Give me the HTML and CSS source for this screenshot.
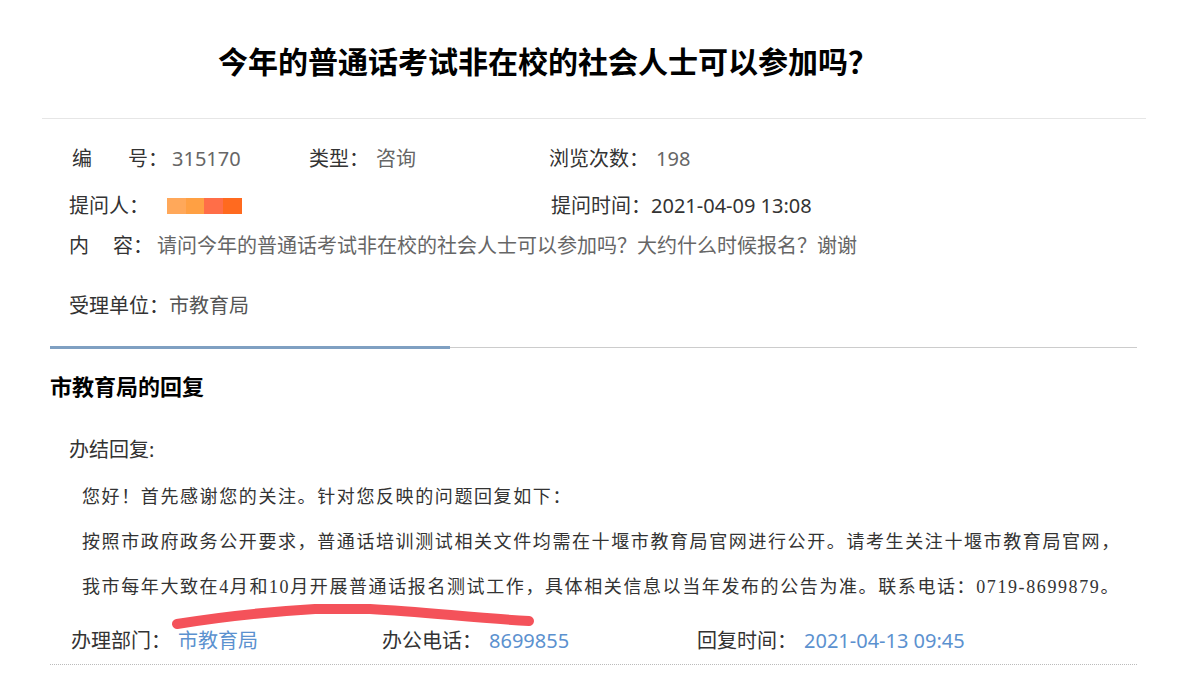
FILE: index.html
```html
<!DOCTYPE html>
<html lang="zh-CN">
<head>
    <meta charset="UTF-8">
    <meta name="viewport" content="width=device-width, initial-scale=1.0">
    <title>今年的普通话考试非在校的社会人士可以参加吗？</title>
    <link rel="stylesheet" href="styles.css">
</head>
<body>
    <div class="page">
        <h1 class="title">今年的普通话考试非在校的社会人士可以参加吗？</h1>

        <div class="info">
            <div class="row row-1">
                <div class="cell"><span class="label label-no">编<span class="sp2"></span>号：</span><span class="val">315170</span></div>
                <div class="cell"><span class="label">类型：</span><span class="val v7">咨询</span></div>
                <div class="cell"><span class="label">浏览次数：</span><span class="val v7">198</span></div>
            </div>
            <div class="row row-2">
                <div class="cell wide"><span class="label">提问人：</span><span class="mask"><i class="m1"></i><i class="m2"></i><i class="m3"></i><i class="m4"></i></span></div>
                <div class="cell cell-time"><span class="label">提问时间：</span><span class="dark">2021-04-09 13:08</span></div>
            </div>
            <div class="row row-3">
                <span class="label">内<span class="sp1"></span>容：</span><span class="val">请问今年的普通话考试非在校的社会人士可以参加吗？大约什么时候报名？谢谢</span>
            </div>
            <div class="row row-4">
                <span class="label">受理单位：</span><span class="unit">市教育局</span>
            </div>
        </div>

        <div class="reply">
            <div class="tabs"><div class="tab-on"></div></div>
            <h2 class="reply-title">市教育局的回复</h2>
            <div class="reply-label">办结回复:</div>
            <div class="reply-body">
                <p>您好！首先感谢您的关注。针对您反映的问题回复如下：</p>
                <p>按照市政府政务公开要求，普通话培训测试相关文件均需在十堰市教育局官网进行公开。请考生关注十堰市教育局官网，</p>
                <p>我市每年大致在4月和10月开展普通话报名测试工作，具体相关信息以当年发布的公告为准。联系电话：0719-8699879。</p>
                <svg class="mark" width="380" height="34" viewBox="0 0 380 34">
                    <path d="M12 28 C 60 20, 100 16, 150 13 L 205 13 C 260 16, 310 22, 364 25" fill="none" stroke="#f4525a" stroke-width="10" stroke-linecap="round"/>
                </svg>
            </div>
            <div class="foot">
                <div class="fcell f1"><span class="label">办理部门：</span><span class="link">市教育局</span></div>
                <div class="fcell f2"><span class="label">办公电话：</span><span class="link">8699855</span></div>
                <div class="fcell"><span class="label">回复时间：</span><span class="link">2021-04-13 09:45</span></div>
            </div>
        </div>
    </div>
</body>
</html>
```

FILE: styles.css
```css
body {
    margin: 0;
    padding: 0;
    background: #fff;
    color: #333;
    font-family: "Noto Sans", "Noto Sans CJK SC", sans-serif;
}
.page {
    width: 1104px;
    margin-left: 42px;
}
.title {
    margin: 0;
    height: 118px;
    line-height: 120px;
    padding-left: 176px;
    font-family: "Noto Sans CJK SC", sans-serif;
    font-size: 30px;
    font-weight: bold;
    color: #000;
    border-bottom: 1px solid #e6e6e6;
}
.info {
    padding-left: 27px;
    font-size: 20px;
}
.row {
    display: flex;
    align-items: center;
    height: 30px;
    line-height: 30px;
    white-space: nowrap;
}
.row-1 { margin-top: 25px; }
.row-2 { margin-top: 17px; }
.row-3 { margin-top: 10px; }
.row-4 { margin-top: 30px; }
.cell {
    width: 240px;
    display: flex;
    align-items: center;
}
.cell.wide { width: 482px; }
.label { color: #333; }
.label-no { margin-left: 3px; }
.sp2 { display: inline-block; width: 36px; }
.sp1 { display: inline-block; width: 24px; }
.val { color: #666; margin-left: 4px; }
.v7 { margin-left: 7px; }
.dark { color: #333; }
.unit { color: #555; }
.mask {
    display: flex;
    margin-left: 18px;
    height: 16px;
}
.mask i { display: block; height: 16px; width: 19px; }
.mask .m1 { background: #ffa85a; }
.mask .m2 { background: #ffa043; width: 18px; }
.mask .m3 { background: #ff6e48; }
.mask .m4 { background: #ff6a1f; }

.reply {
    margin: 0 9px 0 8px;
    padding-top: 25px;
}
.tabs {
    border-bottom: 1px solid #ccc;
    height: 1px;
}
.tab-on {
    width: 400px;
    height: 0;
    border-bottom: 3px solid #7fa0c2;
}
.reply-title {
    margin: 22px 0 0;
    font-family: "Noto Sans CJK SC", sans-serif;
    font-size: 22px;
    font-weight: bold;
    color: #000;
    line-height: 30px;
}
.reply-label {
    margin-top: 35px;
    padding-left: 19px;
    font-size: 20px;
    line-height: 30px;
}
.reply-body {
    position: relative;
    padding-left: 32px;
    margin-top: 10px;
    font-family: "Liberation Serif", "Noto Sans CJK SC", serif;
    font-size: 18px;
    letter-spacing: 1.6px;
    color: #333;
}
.reply-body p {
    margin: 0;
    line-height: 45px;
    white-space: nowrap;
}
.mark {
    position: absolute;
    left: 115px;
    top: 121px;
}
.foot {
    display: flex;
    align-items: center;
    margin-top: 16px;
    padding-left: 21px;
    padding-bottom: 8px;
    height: 30px;
    line-height: 30px;
    font-size: 20px;
    border-bottom: 1px dotted #bbb;
    white-space: nowrap;
}
.fcell { display: flex; }
.f1 { width: 311px; }
.f2 { width: 315px; }
.link {
    color: #5b91cf;
    margin-left: 7px;
}
```
